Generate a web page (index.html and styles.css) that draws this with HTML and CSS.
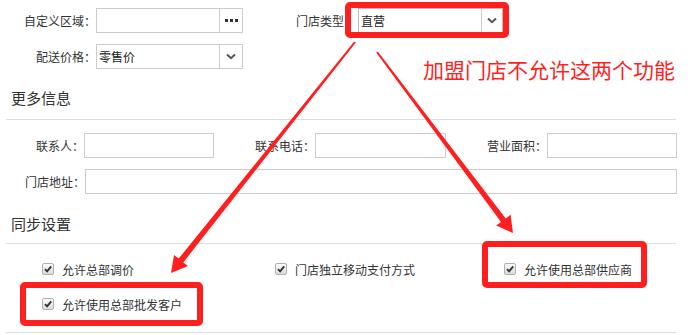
FILE: index.html
```html
<!DOCTYPE html>
<html lang="zh-CN">
<head>
<meta charset="utf-8">
<title>门店信息</title>
<link rel="stylesheet" href="styles.css">
</head>
<body>
<div class="page">
  <div class="top">
    <div class="row">
      <label class="lbl lbl-top">自定义区域：</label>
      <div class="field field-top">
        <span class="text"></span>
        <span class="btn"><span class="dots"><i></i><i></i><i></i></span></span>
      </div>
      <label class="lbl lbl-type">门店类型</label>
      <div class="field field-type">
        <span class="text">直营</span>
        <span class="btn btn-narrow"><svg class="chev" width="10" height="7" viewBox="0 0 10 7"><path d="M1 1.5 L5 5.2 L9 1.5" fill="none" stroke="#555" stroke-width="2"/></svg></span>
      </div>
    </div>
    <div class="row">
      <label class="lbl lbl-top">配送价格：</label>
      <div class="field field-top">
        <span class="text">零售价</span>
        <span class="btn"><svg class="chev" width="10" height="7" viewBox="0 0 10 7"><path d="M1 1.5 L5 5.2 L9 1.5" fill="none" stroke="#555" stroke-width="2"/></svg></span>
      </div>
    </div>
  </div>

  <h3 class="section-title">更多信息</h3>
  <div class="info">
    <div class="row">
      <label class="lbl lbl-info">联系人：</label>
      <div class="field field-130"></div>
      <label class="lbl lbl-mid">联系电话：</label>
      <div class="field field-131"></div>
      <label class="lbl lbl-mid">营业面积：</label>
      <div class="field field-130"></div>
    </div>
    <div class="row">
      <label class="lbl lbl-addr">门店地址：</label>
      <div class="field field-addr"></div>
    </div>
  </div>

  <h3 class="section-title section-title-sync">同步设置</h3>
  <div class="sync">
    <div class="check"><span class="box"><svg width="10" height="10" viewBox="0 0 10 10"><path d="M2 5.2 L4.1 7.4 L8.2 2.4" fill="none" stroke="#333" stroke-width="1.9"/></svg></span>允许总部调价</div>
    <div class="check"><span class="box"><svg width="10" height="10" viewBox="0 0 10 10"><path d="M2 5.2 L4.1 7.4 L8.2 2.4" fill="none" stroke="#333" stroke-width="1.9"/></svg></span>门店独立移动支付方式</div>
    <div class="check"><span class="box"><svg width="10" height="10" viewBox="0 0 10 10"><path d="M2 5.2 L4.1 7.4 L8.2 2.4" fill="none" stroke="#333" stroke-width="1.9"/></svg></span>允许使用总部供应商</div>
    <div class="check"><span class="box"><svg width="10" height="10" viewBox="0 0 10 10"><path d="M2 5.2 L4.1 7.4 L8.2 2.4" fill="none" stroke="#333" stroke-width="1.9"/></svg></span>允许使用总部批发客户</div>
  </div>

  <div class="mark mark-type"></div>
  <div class="mark mark-wholesale"></div>
  <div class="mark mark-supplier"></div>
  <div class="note">加盟门店不允许这两个功能</div>
  <svg class="arrows" width="691" height="335" viewBox="0 0 691 335">
    <polygon fill="#ff1f1f" points="355.8,42.6 183.3,262.4 188,266.1 171,273 174,254.9 178.7,258.6 354.2,41.4"/>
    <polygon fill="#ff1f1f" points="377.8,51.4 505.8,218.4 510.6,214.8 513,233 496.2,225.6 501,222 376.2,52.6"/>
  </svg>
</div>
</body>
</html>
```

FILE: styles.css
```css
html, body {
  margin: 0;
  padding: 0;
  background: #fff;
}
body {
  font-family: "Noto Sans CJK SC", "Liberation Sans", sans-serif;
  font-size: 12px;
  color: #333;
}
.page {
  position: relative;
  width: 691px;
  height: 335px;
  overflow: hidden;
}
.top {
  padding-top: 8px;
  display: flex;
  flex-direction: column;
  gap: 11px;
}
.row {
  display: flex;
  align-items: center;
  height: 25px;
}
.lbl {
  flex: none;
  text-align: right;
  white-space: nowrap;
  line-height: 25px;
}
.lbl-top { width: 96px; }
.lbl-type { width: 101px; padding-right: 14px; }
.lbl-info { width: 84px; }
.lbl-mid { width: 101px; }
.lbl-addr { width: 85px; }

.field {
  flex: none;
  box-sizing: border-box;
  height: 25px;
  border: 1px solid #ccc;
  background: #fff;
  display: flex;
}
.field .text {
  flex: 1;
  padding-left: 2px;
  line-height: 23px;
  color: #222;
}
.field .btn {
  flex: none;
  width: 22px;
  border-left: 1px solid #ccc;
  display: flex;
  align-items: center;
  justify-content: center;
}
.field .btn-narrow { width: 20px; }
.field-top { width: 147px; }
.field-type { width: 145px; border-color: #bbb; }
.field-130 { width: 130px; }
.field-131 { width: 131px; }
.field-addr { width: 592px; }

.dots {
  display: flex;
  gap: 2px;
}
.dots i {
  display: block;
  width: 3px;
  height: 3px;
  background: #333;
}
.chev { display: block; }

.section-title {
  margin: 18px 15px 0 6px;
  padding: 0 0 10px 5px;
  font-size: 15px;
  line-height: 22px;
  font-weight: normal;
  color: #333;
  border-bottom: 1px solid #ddd;
}
.section-title-sync {
  margin-top: 19px;
  padding-bottom: 8px;
}
.info {
  margin-top: 13px;
  display: flex;
  flex-direction: column;
  gap: 11px;
}
.sync {
  margin: 15px 15px 0 6px;
  padding: 0 0 18px 36px;
  border-bottom: 1px solid #ddd;
  display: grid;
  grid-template-columns: 233px 229px auto;
  row-gap: 15px;
}
.check {
  display: flex;
  align-items: center;
  gap: 8px;
  height: 20px;
  white-space: nowrap;
}
.box {
  box-sizing: border-box;
  width: 12px;
  height: 12px;
  border: 1px solid #b0b0b0;
  border-radius: 2px;
  background: linear-gradient(#fafafa, #dcdcdc);
  display: flex;
  align-items: center;
  justify-content: center;
}
.box svg { display: block; }

.mark {
  position: absolute;
  box-sizing: border-box;
  border: 6px solid #ff1f1f;
  border-radius: 5px;
}
.mark-type { left: 345px; top: 2px; width: 164px; height: 36px; }
.mark-wholesale { left: 20px; top: 282px; width: 183px; height: 44px; }
.mark-supplier { left: 482px; top: 241px; width: 165px; height: 47px; }

.note {
  position: absolute;
  left: 423px;
  top: 57px;
  font-size: 21px;
  line-height: 24px;
  color: #ff1f1f;
  white-space: nowrap;
}
.arrows {
  position: absolute;
  left: 0;
  top: 0;
  pointer-events: none;
}
```
